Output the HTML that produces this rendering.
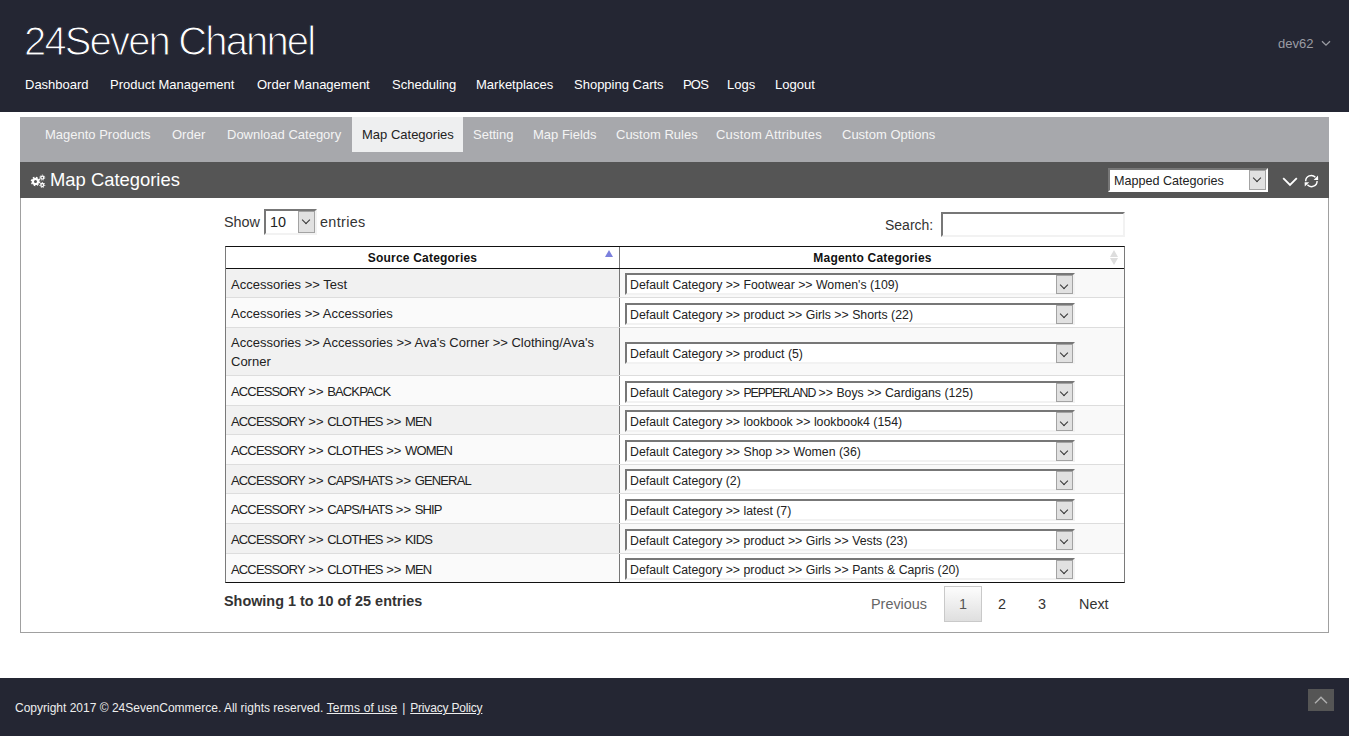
<!DOCTYPE html>
<html><head><meta charset="utf-8">
<style>
*{box-sizing:border-box;margin:0;padding:0}
html,body{width:1349px;height:736px;overflow:hidden;background:#fff;font-family:"Liberation Sans",sans-serif;color:#333}
.abs{position:absolute;white-space:nowrap}
#hdr{position:absolute;left:0;top:0;width:1349px;height:112px;background:#242633}
#title{left:24px;top:21px;font-size:40px;line-height:40px;color:#fff;letter-spacing:-1.85px;-webkit-text-stroke:1.1px #242633}
.nav{top:77px;font-size:13px;line-height:15px;color:#fff}
#dev{left:1278px;top:36px;font-size:13px;line-height:15px;color:#9b9ca3}
#tabs{position:absolute;left:20px;top:117px;width:1309px;height:45px;background:#a7a8ac}
#acttab{position:absolute;left:352px;top:117px;width:111px;height:35px;background:#eeeff0}
.tab{top:127px;font-size:13px;line-height:15px;color:#f4f4f4}
#phdr{position:absolute;left:20px;top:162px;width:1309px;height:36px;background:#555}
#ptitle{left:50px;top:169px;font-size:18.4px;line-height:21px;color:#fff}
#pbody{position:absolute;left:20px;top:198px;width:1309px;height:435px;border:1px solid #a0a0a0;border-top:none}
#ftr{position:absolute;left:0;top:678px;width:1349px;height:58px;background:#242633}
.sel{position:absolute;background:#fff;border:2px solid;border-color:#777 #f2f2f2 #f2f2f2 #777;white-space:nowrap;overflow:hidden;color:#222}
.sel i{position:absolute;top:0;right:0;width:17px;bottom:0;background:#e1e1e1;border:1px solid #a3a3a3}
.sel i:after{content:"";position:absolute;left:50%;top:50%;margin:-5px 0 0 -3.5px;width:5px;height:5px;border:solid #333;border-width:0 1px 1px 0;transform:rotate(45deg)}
.row{position:absolute;left:226px;width:898px;border-bottom:1px solid #ddd}
.row .c1{position:absolute;left:0;top:0;bottom:0;width:394px;border-right:1px solid #777;display:flex;align-items:center;padding-left:5px;padding-top:2px;font-size:13px;line-height:19px;color:#222}
.row .c2{position:absolute;left:394px;top:0;bottom:0;right:0}
.row .sel{left:5px;top:50%;margin-top:-10px;width:450px;height:22px;font-size:12.3px;line-height:18px;padding-left:3px;padding-top:1px}
.row .sel{overflow:visible}.row .sel i{bottom:-1px}.row .sel i:after{margin-top:-3px}
.uc{letter-spacing:-0.85px}.uc2{letter-spacing:-1.1px}
.odd .c1{background:#f1f1f1}.odd .c2{background:#f9f9f9}
.even .c1{background:#fafafa}.even .c2{background:#fff}
#tbl{position:absolute;left:225px;top:246px;width:900px;height:337px;border:1px solid #111;border-left-color:#7a7a7a;border-right-color:#7a7a7a;pointer-events:none}
#thead{position:absolute;left:226px;top:247px;width:898px;height:22px;border-bottom:1px solid #111;background:#fff}
#thead div{position:absolute;top:0;height:21px;font-size:12px;font-weight:bold;line-height:23px;letter-spacing:0.2px;text-align:center;color:#111}
.tri{position:absolute;width:0;height:0;border-left:4px solid transparent;border-right:4px solid transparent}
.pg{top:596px;font-size:14.4px;line-height:17px;color:#333}
</style></head><body>
<div id="hdr"></div>
<div class="abs" id="title">24Seven Channel</div>
<div class="abs nav" style="left:25px">Dashboard</div>
<div class="abs nav" style="left:110px">Product Management</div>
<div class="abs nav" style="left:257px">Order Management</div>
<div class="abs nav" style="left:392px">Scheduling</div>
<div class="abs nav" style="left:476px">Marketplaces</div>
<div class="abs nav" style="left:574px">Shopping Carts</div>
<div class="abs nav" style="left:683px;letter-spacing:-0.8px">POS</div>
<div class="abs nav" style="left:727px">Logs</div>
<div class="abs nav" style="left:775px">Logout</div>
<div class="abs" id="dev">dev62</div>
<svg class="abs" style="left:1320.5px;top:40px" width="10" height="7" viewBox="0 0 10 7"><path d="M1 1.2 L5 5.2 L9 1.2" fill="none" stroke="#9b9ca3" stroke-width="1.3"/></svg>

<div id="tabs"></div>
<div id="acttab"></div>
<div class="abs tab" style="left:45px">Magento Products</div>
<div class="abs tab" style="left:172px">Order</div>
<div class="abs tab" style="left:227px">Download Category</div>
<div class="abs tab" style="left:362px;color:#222">Map Categories</div>
<div class="abs tab" style="left:473px">Setting</div>
<div class="abs tab" style="left:533px">Map Fields</div>
<div class="abs tab" style="left:616px">Custom Rules</div>
<div class="abs tab" style="left:716px;letter-spacing:0.2px">Custom Attributes</div>
<div class="abs tab" style="left:842px">Custom Options</div>

<div id="phdr"></div>
<svg class="abs" style="left:29px;top:172px" width="18" height="18" viewBox="0 0 18 18">
 <g fill="none" stroke="#fff">
  <circle cx="6.5" cy="9.4" r="2.6" stroke-width="2.2"/>
  <circle cx="6.5" cy="9.4" r="4.1" stroke-width="1.4" stroke-dasharray="1.6 1.62"/>
  <circle cx="13.3" cy="5.6" r="1.5" stroke-width="1.3"/>
  <circle cx="13.3" cy="5.6" r="2.5" stroke-width="1.0" stroke-dasharray="1.1 1.1"/>
  <circle cx="13.3" cy="13" r="1.5" stroke-width="1.3"/>
  <circle cx="13.3" cy="13" r="2.5" stroke-width="1.0" stroke-dasharray="1.1 1.1"/>
 </g>
</svg>
<div class="abs" id="ptitle">Map Categories</div>
<div class="sel" style="left:1108px;top:168px;width:160px;height:24px;border-color:#777 #fff #fff #777;font-size:12.6px;line-height:20px;padding-left:4px;padding-top:1px">Mapped Categories<i></i></div>
<svg class="abs" style="left:1281px;top:175px" width="18" height="13" viewBox="0 0 18 13"><path d="M2.2 3.2 L9 10 L15.8 3.2" fill="none" stroke="#fff" stroke-width="1.8"/></svg>
<svg class="abs" style="left:1303px;top:174px" width="17" height="15" viewBox="0 0 17 15">
 <path d="M2.7 7.3 A5.6 5.6 0 0 1 12.4 3.3" fill="none" stroke="#fff" stroke-width="1.4"/>
 <path d="M15 1.6 L15.2 6 L10.6 6 Z" fill="#fff"/>
 <path d="M14.1 6.9 A5.6 5.6 0 0 1 4.4 10.8" fill="none" stroke="#fff" stroke-width="1.4"/>
 <path d="M1.8 12.6 L1.6 8.2 L6.2 8.2 Z" fill="#fff"/>
</svg>
<div id="pbody"></div>

<div class="abs" style="left:224px;top:214px;font-size:14.4px;line-height:17px">Show</div>
<div class="sel" style="left:264px;top:209px;width:53px;height:26px;font-size:14.4px;line-height:22px;padding-left:4px">10<i></i></div>
<div class="abs" style="left:320px;top:214px;font-size:14.4px;line-height:17px;letter-spacing:0.35px">entries</div>
<div class="abs" style="left:885px;top:217px;font-size:14px;line-height:17px">Search:</div>
<div class="sel" style="left:941px;top:212px;width:184px;height:25px"></div>

<div id="thead">
 <div style="left:0;width:394px;border-right:1px solid #777">Source Categories</div>
 <div style="left:394px;width:504px;padding-left:1px">Magento Categories</div>
</div>
<div class="tri" style="left:605px;top:250px;border-bottom:7px solid #7b80dd"></div>
<div class="tri" style="left:1110px;top:250px;border-bottom:7px solid #ddd"></div>
<div class="tri" style="left:1110px;top:258px;border-top:7px solid #ddd"></div>
<div class="row odd" style="top:269px;height:29px"><div class="c1"><div class="t">Accessories &gt;&gt; Test</div></div><div class="c2"><div class="sel"><span>Default Category &gt;&gt; Footwear &gt;&gt; Women's (109)</span><i></i></div></div></div>
<div class="row even" style="top:298px;height:30px"><div class="c1"><div class="t">Accessories &gt;&gt; Accessories</div></div><div class="c2"><div class="sel"><span>Default Category &gt;&gt; product &gt;&gt; Girls &gt;&gt; Shorts (22)</span><i></i></div></div></div>
<div class="row odd" style="top:328px;height:48px"><div class="c1" style="padding-top:1px"><div class="t">Accessories &gt;&gt; Accessories &gt;&gt; Ava's Corner &gt;&gt; Clothing/Ava's<br>Corner</div></div><div class="c2"><div class="sel"><span>Default Category &gt;&gt; product (5)</span><i></i></div></div></div>
<div class="row even" style="top:376px;height:30px"><div class="c1"><div class="t"><span class='uc'>ACCESSORY</span> &gt;&gt; <span class='uc'>BACKPACK</span></div></div><div class="c2"><div class="sel"><span>Default Category &gt;&gt; <span class='uc2'>PEPPERLAND</span> &gt;&gt; Boys &gt;&gt; Cardigans (125)</span><i></i></div></div></div>
<div class="row odd" style="top:406px;height:29px"><div class="c1"><div class="t"><span class='uc'>ACCESSORY</span> &gt;&gt; <span class='uc'>CLOTHES</span> &gt;&gt; <span class='uc'>MEN</span></div></div><div class="c2"><div class="sel"><span>Default Category &gt;&gt; lookbook &gt;&gt; lookbook4 (154)</span><i></i></div></div></div>
<div class="row even" style="top:435px;height:30px"><div class="c1"><div class="t"><span class='uc'>ACCESSORY</span> &gt;&gt; <span class='uc'>CLOTHES</span> &gt;&gt; <span class='uc'>WOMEN</span></div></div><div class="c2"><div class="sel"><span>Default Category &gt;&gt; Shop &gt;&gt; Women (36)</span><i></i></div></div></div>
<div class="row odd" style="top:465px;height:29px"><div class="c1"><div class="t"><span class='uc'>ACCESSORY</span> &gt;&gt; <span class='uc'>CAPS/HATS</span> &gt;&gt; <span class='uc'>GENERAL</span></div></div><div class="c2"><div class="sel"><span>Default Category (2)</span><i></i></div></div></div>
<div class="row even" style="top:494px;height:30px"><div class="c1"><div class="t"><span class='uc'>ACCESSORY</span> &gt;&gt; <span class='uc'>CAPS/HATS</span> &gt;&gt; <span class='uc'>SHIP</span></div></div><div class="c2"><div class="sel"><span>Default Category &gt;&gt; latest (7)</span><i></i></div></div></div>
<div class="row odd" style="top:524px;height:30px"><div class="c1"><div class="t"><span class='uc'>ACCESSORY</span> &gt;&gt; <span class='uc'>CLOTHES</span> &gt;&gt; <span class='uc'>KIDS</span></div></div><div class="c2"><div class="sel"><span>Default Category &gt;&gt; product &gt;&gt; Girls &gt;&gt; Vests (23)</span><i></i></div></div></div>
<div class="row even" style="top:554px;height:29px"><div class="c1"><div class="t"><span class='uc'>ACCESSORY</span> &gt;&gt; <span class='uc'>CLOTHES</span> &gt;&gt; <span class='uc'>MEN</span></div></div><div class="c2"><div class="sel"><span>Default Category &gt;&gt; product &gt;&gt; Girls &gt;&gt; Pants &amp; Capris (20)</span><i></i></div></div></div>
<div id="tbl"></div>

<div class="abs" style="left:224px;top:593px;font-size:14.4px;line-height:17px;font-weight:bold;color:#333">Showing 1 to 10 of 25 entries</div>
<div class="abs pg" style="left:871px;color:#666">Previous</div>
<div class="abs" style="left:944px;top:586px;width:38px;height:36px;border:1px solid #c9c9c9;background:linear-gradient(#fdfdfd,#dfdfdf)"></div>
<div class="abs pg" style="left:959px;color:#555">1</div>
<div class="abs pg" style="left:998px">2</div>
<div class="abs pg" style="left:1038px">3</div>
<div class="abs pg" style="left:1079px">Next</div>

<div id="ftr"></div>
<div class="abs" style="left:15px;top:701px;font-size:12px;line-height:15px;color:#eee">Copyright 2017 © 24SevenCommerce. All rights reserved. <u style="letter-spacing:0.17px">Terms of use</u><span style="margin:0 1.5px"> | </span><u style="letter-spacing:-0.18px">Privacy Policy</u></div>
<div class="abs" style="left:1308px;top:689px;width:26px;height:22px;background:#555"></div>
<svg class="abs" style="left:1312px;top:693px" width="18" height="14" viewBox="0 0 18 14"><path d="M3 10.2 L9 4.2 L15 10.2" fill="none" stroke="#b0b0b0" stroke-width="1.4"/></svg>
</body></html>
